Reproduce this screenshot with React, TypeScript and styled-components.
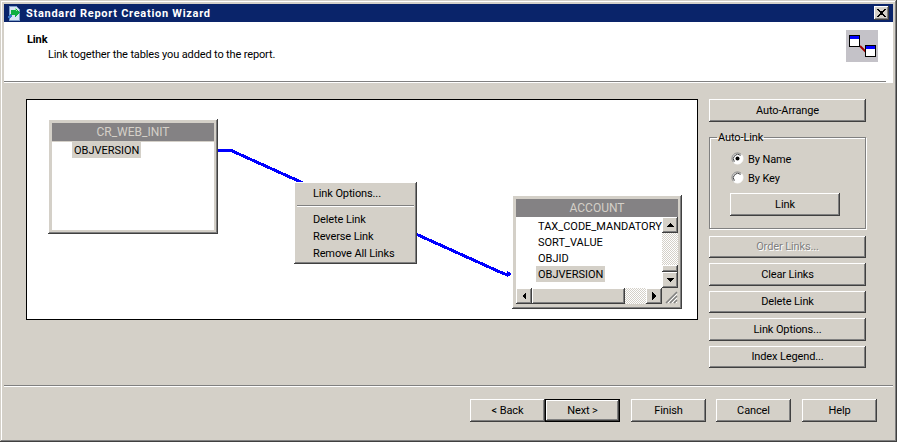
import React from 'react';
import styled, { createGlobalStyle, css } from 'styled-components';

const GlobalStyle = createGlobalStyle`
    html, body {
        margin: 0;
        padding: 0;
        background: #d4d0c8;
    }
    * {
        box-sizing: border-box;
    }
`;

const raised = css`
    background-color: #d4d0c8;
    box-shadow: inset -1px -1px 0 #404040, inset 1px 1px 0 #ffffff, inset -2px -2px 0 #808080;
`;

const Window = styled.div`
    width: 897px;
    height: 442px;
    padding: 4px;
    display: flex;
    flex-direction: column;
    background-color: #d4d0c8;
    box-shadow: inset -1px -1px 0 #404040, inset 1px 1px 0 #d4d0c8, inset -2px -2px 0 #808080, inset 2px 2px 0 #ffffff;
    font-family: Roboto, 'Liberation Sans', Arial, sans-serif;
    font-size: 11px;
    letter-spacing: -0.12px;
    color: #000000;
`;

const TitleBar = styled.div`
    height: 18px;
    flex: none;
    display: flex;
    align-items: center;
    padding: 0 4px 0 2px;
    background-color: #0a246a;
    color: #ffffff;
    font-weight: 700;
    font-size: 11px;
    letter-spacing: 0.72px;
`;

const TitleText = styled.span`
    margin-left: 4px;
    flex: 1;
`;

const CloseButton = styled.button`
    ${raised}
    width: 15px;
    height: 14px;
    border: none;
    padding: 0;
    display: flex;
    align-items: center;
    justify-content: center;
`;

const Header = styled.div`
    height: 61px;
    flex: none;
    display: flex;
    flex-direction: column;
    background-color: #ffffff;
`;

const HeaderContent = styled.div`
    flex: 1;
    display: flex;
    justify-content: space-between;
    padding: 8px 15px 0 23px;
`;

const HeaderTitle = styled.div`
    font-weight: 700;
    line-height: 16px;
    margin-top: 2px;
`;

const HeaderSubtitle = styled.div`
    margin-left: 21px;
    line-height: 14px;
    letter-spacing: -0.14px;
`;

const HeaderRule = styled.div`
    width: 882px;
    height: 1px;
    margin-bottom: 1px;
    background-color: #808080;
`;

const Body = styled.div`
    flex: 1;
    display: flex;
    align-items: flex-start;
    gap: 11px;
    padding: 16px 0 0 22px;
`;

const Canvas = styled.div`
    position: relative;
    width: 672px;
    height: 221px;
    flex: none;
    border: 1px solid #000000;
    background-color: #ffffff;
`;

const LinkLine = styled.svg`
    position: absolute;
    left: -1px;
    top: -1px;
`;

const TableNode = styled.div<{ $x: number; $y: number; $height: number }>`
    position: absolute;
    left: ${(p) => p.$x}px;
    top: ${(p) => p.$y}px;
    width: 170px;
    height: ${(p) => p.$height}px;
    display: flex;
    flex-direction: column;
    padding: 4px;
    background-color: #d4d0c8;
    box-shadow: inset -1px -1px 0 #404040, inset 1px 1px 0 #ffffff, inset -2px -2px 0 #808080;
`;

const NodeTitle = styled.div`
    height: 18px;
    flex: none;
    text-align: center;
    line-height: 18px;
    font-size: 12px;
    letter-spacing: 0;
    background-color: #848284;
    color: #d4d0c8;
`;

const NodeList = styled.div`
    flex: 1;
    margin-top: 1px;
    background-color: #ffffff;
    padding-left: 20px;
`;

const NodeRow = styled.div<{ $selected?: boolean }>`
    width: fit-content;
    height: 16px;
    line-height: 18px;
    padding: 0 2px;
    letter-spacing: 0;
    background-color: ${(p) => (p.$selected ? '#d4d0c8' : 'transparent')};
    white-space: nowrap;
`;

const ScrollGrid = styled.div`
    flex: 1;
    display: grid;
    grid-template-columns: 146px 16px;
    grid-template-rows: 71px 16px;
    margin-top: 0;
`;

const ScrollList = styled.div`
    background-color: #ffffff;
    padding-left: 20px;
    overflow: hidden;
    border-top: 1px solid #ffffff;
`;

const ScrollY = styled.div`
    display: flex;
    flex-direction: column;
`;

const ScrollX = styled.div`
    display: flex;
`;

const ScrollButton = styled.div`
    ${raised}
    width: 16px;
    height: 16px;
    flex: none;
    display: flex;
    align-items: center;
    justify-content: center;
`;

const ScrollTrack = styled.div`
    flex: 1;
    background-color: #ffffff;
    background-image: conic-gradient(#d4d0c8 25%, transparent 0 50%, #d4d0c8 0 75%, transparent 0);
    background-size: 2px 2px;
`;

const ScrollThumb = styled.div<{ $length: number; $vertical?: boolean }>`
    ${raised}
    flex: none;
    width: ${(p) => (p.$vertical ? '16px' : `${p.$length}px`)};
    height: ${(p) => (p.$vertical ? `${p.$length}px` : '16px')};
`;

const Grip = styled.div`
    background-color: #d4d0c8;
    display: flex;
    align-items: flex-end;
    justify-content: flex-end;
`;

const ContextMenu = styled.div`
    ${raised}
    position: absolute;
    left: 267px;
    top: 82px;
    width: 123px;
    height: 82px;
    padding: 3px;
`;

const MenuItem = styled.div`
    height: 17px;
    line-height: 17px;
    padding-left: 16px;
    white-space: nowrap;
`;

const MenuDivider = styled.div`
    height: 2px;
    margin: 3px 0 4px;
    background-color: #808080;
    border-bottom: 1px solid #ffffff;
`;

const SidePanel = styled.div`
    width: 157px;
    flex: none;
    display: flex;
    flex-direction: column;
`;

const SideButton = styled.button`
    ${raised}
    width: 100%;
    height: 22.5px;
    border: none;
    padding: 0;
    margin-bottom: 5px;
    font: inherit;
    letter-spacing: inherit;
    color: #000000;
    &:disabled {
        color: #808080;
        text-shadow: 1px 1px 0 #ffffff;
    }
`;

const AutoArrangeButton = styled(SideButton)`
    height: 23px;
    margin-bottom: 9px;
`;

const GroupBox = styled.fieldset`
    height: 98px;
    margin: 0 0 6.5px;
    padding: 5px 0 0 7px;
    border: 1px solid #808080;
    box-shadow: 1px 1px 0 #ffffff, inset 1px 1px 0 #ffffff;
    min-width: 0;
`;

const GroupLegend = styled.legend`
    padding: 0 1px;
    line-height: 13px;
    height: 13px;
`;

const RadioRow = styled.label`
    height: 19px;
    display: flex;
    align-items: center;
    gap: 4px;
    margin-left: 14px;
`;

const RadioText = styled.span`
    margin-top: 2px;
`;

const LinkButton = styled.button`
    ${raised}
    display: block;
    width: 110px;
    height: 23px;
    margin: 6px 0 0 13px;
    border: none;
    padding: 0;
    font: inherit;
    letter-spacing: inherit;
    color: #000000;
`;

const Footer = styled.div`
    height: 53px;
    flex: none;
    display: flex;
    justify-content: flex-end;
    padding: 13px 16px 0 0;
    border-top: 1px solid #808080;
    box-shadow: inset 0 1px 0 #ffffff;
`;

const FooterButton = styled.button<{ $gap?: number; $default?: boolean }>`
    ${raised}
    width: 75px;
    height: 23px;
    margin-left: ${(p) => p.$gap ?? 0}px;
    border: none;
    padding: 0;
    font: inherit;
    letter-spacing: inherit;
    color: #000000;
    ${(p) =>
        p.$default &&
        css`
            box-shadow: inset 0 0 0 1px #000000, inset -2px -2px 0 #404040, inset 2px 2px 0 #ffffff,
                inset -3px -3px 0 #808080;
        `}
`;

const AppIcon = () => (
    <svg width="16" height="16" viewBox="0 0 16 16" shapeRendering="crispEdges">
        <path d="M3 1h7l3 3v11H3z" fill="#d8e4f4" stroke="#7c9cc8" />
        <path d="M1 12l3-3 2 2-3 3z" fill="#3a78c8" />
        <path d="M9 2v3H5v5h4v3l5-5.500z" fill="#10b040" />
        <path d="M9 3v2M10 5h1" stroke="#90f0a0" />
    </svg>
);

const CloseIcon = () => (
    <svg width="9" height="8" viewBox="0 0 9 8" shapeRendering="crispEdges">
        <path d="M0 0h2v1h1v1h3V1h1V0h2v1H8v1H7v1H6v2h1v1h1v1h1v1H7V7H6V6H3v1H2v1H0V7h1V6h1V5h1V3H2V2H1V1H0z" fill="#000000" />
    </svg>
);

const LinkIcon = () => (
    <svg width="32" height="32" viewBox="0 0 32 32" shapeRendering="crispEdges">
        <rect width="32" height="32" fill="#c4c2c8" />
        <path d="M14 16l6 6" stroke="#a00000" strokeWidth="2" shapeRendering="auto" />
        <rect x="3.500" y="5.500" width="10" height="11" fill="#ffffff" stroke="#000000" />
        <rect x="4" y="6" width="9" height="3" fill="#0000ff" />
        <rect x="19.500" y="15.500" width="10" height="11" fill="#ffffff" stroke="#000000" />
        <rect x="20" y="16" width="9" height="3" fill="#0000ff" />
    </svg>
);

const Arrow = ({ d }: { d: string }) => (
    <svg width="8" height="8" viewBox="0 0 8 8" shapeRendering="crispEdges">
        <path d={d} fill="#000000" />
    </svg>
);

const GripIcon = () => (
    <svg width="13" height="13" viewBox="0 0 13 13" shapeRendering="crispEdges">
        <path d="M12 1L1 12M12 5L5 12M12 9L9 12" stroke="#808080" strokeWidth="1.500" shapeRendering="auto" fill="none" />
        <path d="M12 3L3 12M12 7L7 12M12 11L11 12" stroke="#ffffff" fill="none" shapeRendering="auto" />
    </svg>
);

const RadioIcon = ({ checked }: { checked?: boolean }) => (
    <svg width="13" height="13" viewBox="0 0 13 13">
        <circle cx="6.500" cy="6.500" r="5.500" fill="#ffffff" />
        <path d="M2.600 10.400A5.500 5.500 0 0 1 10.400 2.600" fill="none" stroke="#808080" />
        <path d="M3.400 9.600A4.400 4.400 0 0 1 9.600 3.400" fill="none" stroke="#404040" />
        <path d="M2.600 10.400A5.500 5.500 0 0 0 10.400 2.600" fill="none" stroke="#ffffff" />
        {checked && <circle cx="6.500" cy="6.500" r="2" fill="#000000" />}
    </svg>
);

const sideButtons = ['Clear Links', 'Delete Link', 'Link Options...', 'Index Legend...'];
const accountRows = ['TAX_CODE_MANDATORY', 'SORT_VALUE', 'OBJID'];

export default function App() {
    return (
        <Window>
            <GlobalStyle />
            <TitleBar>
                <AppIcon />
                <TitleText>Standard Report Creation Wizard</TitleText>
                <CloseButton>
                    <CloseIcon />
                </CloseButton>
            </TitleBar>
            <Header>
                <HeaderContent>
                    <div>
                        <HeaderTitle>Link</HeaderTitle>
                        <HeaderSubtitle>Link together the tables you added to the report.</HeaderSubtitle>
                    </div>
                    <LinkIcon />
                </HeaderContent>
                <HeaderRule />
            </Header>
            <Body>
                <Canvas>
                    <LinkLine width="672" height="221" viewBox="26 99 672 221" shapeRendering="crispEdges">
                        <path d="M218 150H230L500 272L505 274H510" fill="none" stroke="#0000ff" strokeWidth="3" />
                        <path d="M507 271L512 274L507 277z" fill="#0000ff" />
                    </LinkLine>
                    <TableNode $x={21} $y={19} $height={115}>
                        <NodeTitle>CR_WEB_INIT</NodeTitle>
                        <NodeList>
                            <NodeRow $selected>OBJVERSION</NodeRow>
                        </NodeList>
                    </TableNode>
                    <TableNode $x={485} $y={95} $height={114}>
                        <NodeTitle>ACCOUNT</NodeTitle>
                        <ScrollGrid>
                            <ScrollList>
                                {accountRows.map((row) => (
                                    <NodeRow key={row}>{row}</NodeRow>
                                ))}
                                <NodeRow $selected>OBJVERSION</NodeRow>
                            </ScrollList>
                            <ScrollY>
                                <ScrollButton>
                                    <Arrow d="M4 2h0l4 4H0z" />
                                </ScrollButton>
                                <ScrollTrack />
                                <ScrollThumb $vertical $length={7} />
                                <ScrollButton>
                                    <Arrow d="M0 2h8L4 6z" />
                                </ScrollButton>
                            </ScrollY>
                            <ScrollX>
                                <ScrollButton>
                                    <Arrow d="M6 0v8L2 4z" />
                                </ScrollButton>
                                <ScrollThumb $length={93} />
                                <ScrollTrack />
                                <ScrollButton>
                                    <Arrow d="M2 0l4 4-4 4z" />
                                </ScrollButton>
                            </ScrollX>
                            <Grip>
                                <GripIcon />
                            </Grip>
                        </ScrollGrid>
                    </TableNode>
                    <ContextMenu>
                        <MenuItem>Link Options...</MenuItem>
                        <MenuDivider />
                        <MenuItem>Delete Link</MenuItem>
                        <MenuItem>Reverse Link</MenuItem>
                        <MenuItem>Remove All Links</MenuItem>
                    </ContextMenu>
                </Canvas>
                <SidePanel>
                    <AutoArrangeButton>Auto-Arrange</AutoArrangeButton>
                    <GroupBox>
                        <GroupLegend>Auto-Link</GroupLegend>
                        <RadioRow>
                            <RadioIcon checked />
                            <RadioText>By Name</RadioText>
                        </RadioRow>
                        <RadioRow>
                            <RadioIcon />
                            <RadioText>By Key</RadioText>
                        </RadioRow>
                        <LinkButton>Link</LinkButton>
                    </GroupBox>
                    <SideButton disabled>Order Links...</SideButton>
                    {sideButtons.map((label) => (
                        <SideButton key={label}>{label}</SideButton>
                    ))}
                </SidePanel>
            </Body>
            <Footer>
                <FooterButton>&lt; Back</FooterButton>
                <FooterButton $default>Next &gt;</FooterButton>
                <FooterButton $gap={11}>Finish</FooterButton>
                <FooterButton $gap={10}>Cancel</FooterButton>
                <FooterButton $gap={11}>Help</FooterButton>
            </Footer>
        </Window>
    );
}
